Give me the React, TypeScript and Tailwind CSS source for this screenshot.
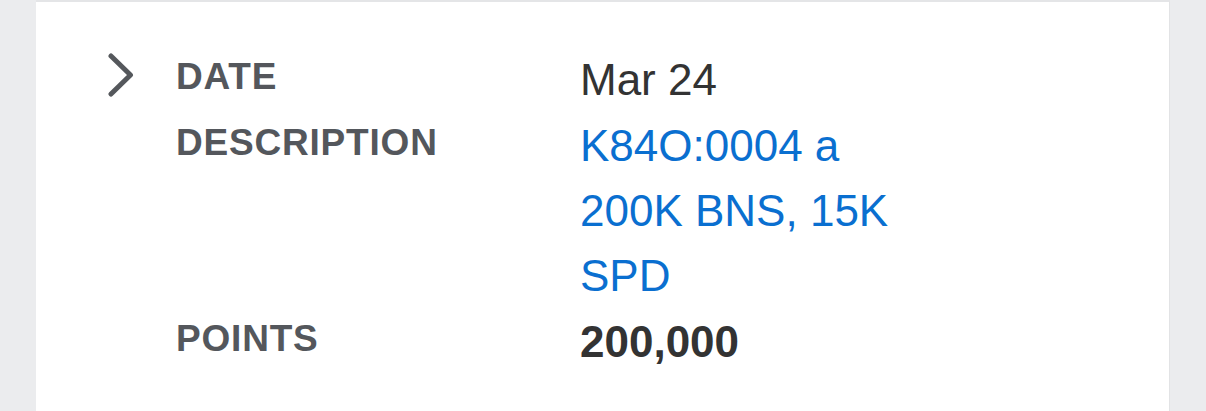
export default function App() {
  const labelCls =
    "font-bold text-[37px] leading-[59px] text-[#54575c] tracking-[0.8px]";
  const valueCls = "text-[44px] leading-[65px]";

  return (
    <div
      className="min-h-[411px] h-[411px] overflow-hidden bg-[#ebecee] pl-[36px]"
      style={{ fontFamily: '"Liberation Sans", Arial, Helvetica, sans-serif' }}
    >
      <div className="w-[1134px] h-full bg-white border-t-2 border-[#e4e5e7] border-r border-r-[#e2e3e5] pt-[45px] pl-[72px] flex items-start">
        <div className="w-[68px] shrink-0 pt-[6px]">
          <svg width="27" height="44" viewBox="0 0 27 44" fill="none">
            <polyline
              points="3,3 22.5,22 3,41"
              stroke="#55585c"
              strokeWidth="5"
              strokeLinecap="round"
              strokeLinejoin="round"
            />
          </svg>
        </div>
        <div className="grid grid-cols-[404px_1fr] content-start gap-y-[1px]">
          <div className={labelCls}>DATE</div>
          <div className={`${valueCls} text-[#333333]`}>Mar 24</div>

          <div className={labelCls}>DESCRIPTION</div>
          <div className={`${valueCls} text-[#0a6fd0] w-[345px]`}>
            K84O:0004 a 200K BNS, 15K SPD
          </div>

          <div className={labelCls}>POINTS</div>
          <div className={`${valueCls} font-bold text-[#333333]`}>200,000</div>
        </div>
      </div>
    </div>
  );
}
